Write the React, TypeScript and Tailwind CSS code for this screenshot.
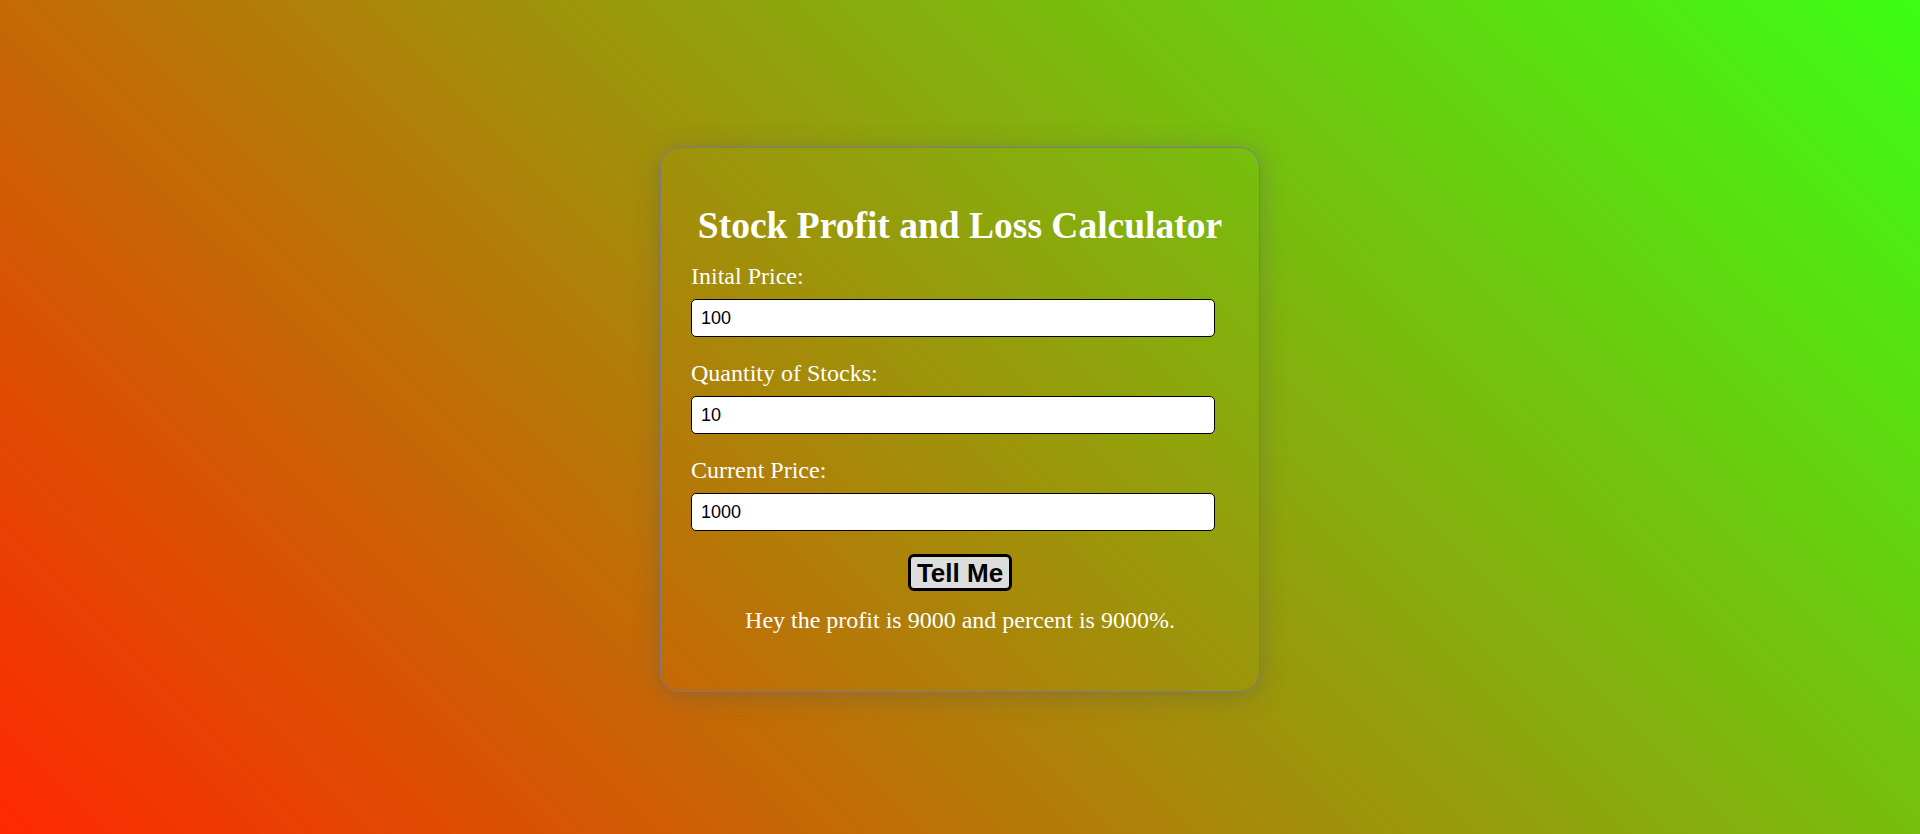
import { useState } from "react";

interface FieldProps {
  id: string;
  label: string;
  value: string;
  onChange: (v: string) => void;
}

function Field({ id, label, value, onChange }: FieldProps) {
  return (
    <div className="flex flex-col">
      <label
        htmlFor={id}
        className="text-[24px] leading-[28px] text-white font-['Liberation_Serif','Times_New_Roman',serif]"
      >
        {label}
      </label>
      <input
        id={id}
        type="number"
        value={value}
        onChange={(e) => onChange(e.target.value)}
        className="mt-[9px] h-[38px] w-[524px] rounded-[5px] border border-black bg-white pl-[9px] text-[18px] text-black font-['Liberation_Sans',Arial,sans-serif] outline-none [appearance:textfield] [&::-webkit-inner-spin-button]:appearance-none [&::-webkit-outer-spin-button]:appearance-none"
      />
    </div>
  );
}

export default function App() {
  const [initial, setInitial] = useState("100");
  const [qty, setQty] = useState("10");
  const [current, setCurrent] = useState("1000");
  const [message, setMessage] = useState(
    "Hey the profit is 9000 and percent is 9000%."
  );

  function tellMe() {
    const ip = Number(initial);
    const q = Number(qty);
    const cp = Number(current);
    if (!ip || !q || !cp) {
      setMessage("Please fill out all the fields.");
      return;
    }
    const diff = (cp - ip) * q;
    const pct = Math.abs((diff / ip) * 100);
    if (diff > 0) {
      setMessage(`Hey the profit is ${diff} and percent is ${pct}%.`);
    } else if (diff < 0) {
      setMessage(`Hey the loss is ${-diff} and percent is ${pct}%.`);
    } else {
      setMessage("No pain no gain and no gain no pain.");
    }
  }

  return (
    <div className="flex h-[834px] w-full items-center justify-center bg-[linear-gradient(45deg,#ff2800,#3cff14)] pt-[5px]">
      <div className="flex w-[600px] flex-col rounded-[20px] border border-[#7c7c86] px-[30px] pt-[57px] pb-[57px] shadow-[0_4px_24px_rgba(90,90,90,0.4)]">
        <h1 className="text-center text-[37.5px] font-bold leading-[42px] text-white font-['Liberation_Serif','Times_New_Roman',serif]">
          Stock Profit and Loss Calculator
        </h1>
        <div className="mt-[15px] flex flex-col gap-[22px]">
          <Field id="initial" label="Inital Price:" value={initial} onChange={setInitial} />
          <Field id="qty" label="Quantity of Stocks:" value={qty} onChange={setQty} />
          <Field id="current" label="Current Price:" value={current} onChange={setCurrent} />
        </div>
        <div className="mt-[23px] flex justify-center">
          <button
            onClick={tellMe}
            className="h-[37px] w-[104px] rounded-[6px] border-[3px] border-black bg-[#dddddd] text-[26px] font-bold leading-none text-black font-['Liberation_Sans',Arial,sans-serif]"
          >
            Tell Me
          </button>
        </div>
        <p className="mt-[15px] text-center text-[24px] leading-[28px] text-white font-['Liberation_Serif','Times_New_Roman',serif]">
          {message}
        </p>
      </div>
    </div>
  );
}
